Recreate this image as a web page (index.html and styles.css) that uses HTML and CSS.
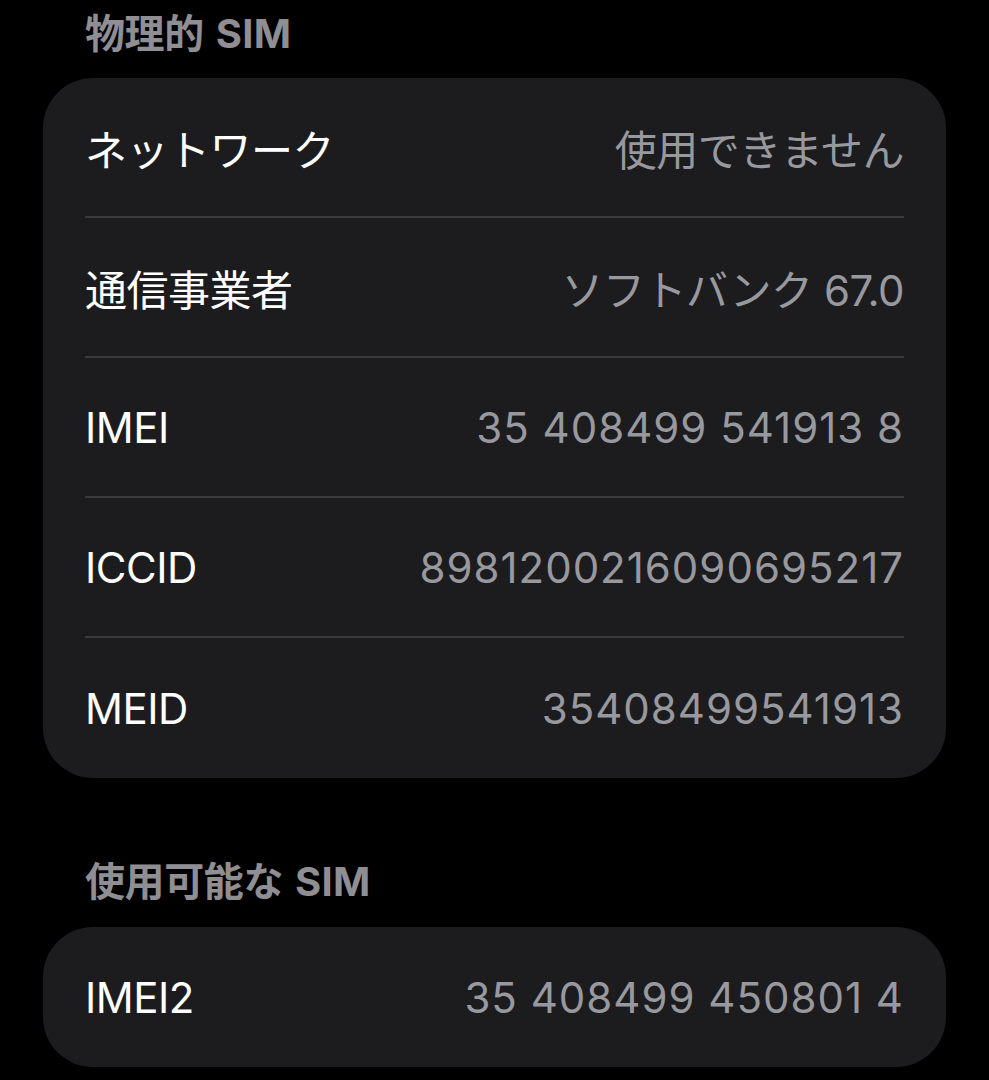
FILE: index.html
```html
<!DOCTYPE html>
<html lang="ja">
<head>
<meta charset="utf-8">
<link rel="stylesheet" href="styles.css">
</head>
<body>
<div class="page">
  <h2 class="section-title">物理的<span class="lat">SIM</span></h2>
  <div class="card">
    <div class="row"><span class="label">ネットワーク</span><span class="value">使用できません</span></div>
    <div class="row"><span class="label">通信事業者</span><span class="value">ソフトバンク 67.0</span></div>
    <div class="row"><span class="label">IMEI</span><span class="value num">35 408499 541913 8</span></div>
    <div class="row"><span class="label">ICCID</span><span class="value num">8981200216090695217</span></div>
    <div class="row"><span class="label">MEID</span><span class="value num">35408499541913</span></div>
  </div>
  <h2 class="section-title section-next">使用可能な<span class="lat">SIM</span></h2>
  <div class="card">
    <div class="row"><span class="label">IMEI2</span><span class="value num">35 408499 450801 4</span></div>
  </div>
</div>
</body>
</html>
```

FILE: styles.css
```css
html, body {
  margin: 0;
  padding: 0;
  background: #000;
}
body {
  font-family: "Inter", "Noto Sans CJK JP", sans-serif;
  -webkit-font-smoothing: antialiased;
}
.page {
  width: 989px;
  height: 1080px;
  overflow: hidden;
  padding: 0 43px;
  box-sizing: border-box;
}
.section-title {
  margin: 0;
  padding: 14px 0 0 42px;
  height: 78px;
  box-sizing: border-box;
  font-size: 40px;
  font-weight: 600;
  letter-spacing: -0.4px;
  color: #8e8e93;
  line-height: 1;
  display: flex;
  align-items: flex-start;
}
.section-title .lat {
  margin-left: 12px;
  font-weight: 700;
  letter-spacing: 0.3px;
}
.section-next {
  margin-top: 84px;
  height: 65px;
  padding-top: 0;
}
.card {
  background: #1c1c1e;
  border-radius: 50px;
  padding: 0 42px;
}
.row {
  height: 140px;
  box-sizing: border-box;
  display: flex;
  align-items: center;
  justify-content: space-between;
  font-size: 42px;
  letter-spacing: -0.5px;
  border-bottom: 2px solid #3a3a3d;
}
.row:last-child {
  border-bottom: none;
}
.label {
  color: #fff;
}
.value {
  color: #98989f;
}
.value.num {
  letter-spacing: 1px;
}
```
